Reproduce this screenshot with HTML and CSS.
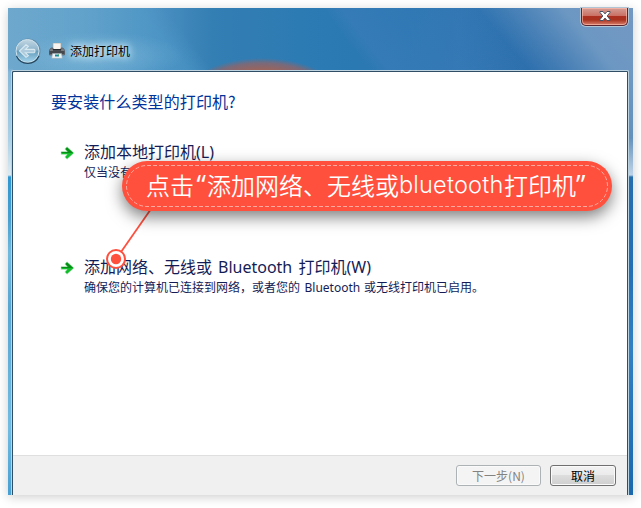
FILE: index.html
```html
<!DOCTYPE html>
<html lang="zh-CN">
<head>
<meta charset="utf-8">
<title>添加打印机</title>
<link rel="stylesheet" href="styles.css">
</head>
<body>
<div class="window">
  <button class="close" aria-label="关闭">
    <svg width="12" height="10" viewBox="0 0 12 10"><path d="M1 .5h3l2 2.400 2-2.400h3v1L8.200 5 11 8.500v1H8L6 7.100 4 9.500H1v-1L3.800 5 1 1.500z" fill="#fff" stroke="#465264" stroke-width="1"/></svg>
  </button>
  <header class="caption">
    <svg class="back" width="28" height="28" viewBox="0 0 28 28">
      <defs><linearGradient id="orb" x1="0" y1="0" x2="0" y2="1"><stop offset="0" stop-color="#c2d7e3"/><stop offset=".46" stop-color="#8db4cb"/><stop offset=".5" stop-color="#649cbc"/><stop offset="1" stop-color="#a4d5ed"/></linearGradient></defs>
      <circle cx="14" cy="14" r="12.500" fill="#577f99" opacity=".6"/>
      <circle cx="13.500" cy="14" r="11.500" fill="url(#orb)" stroke="#d1e4ed"/>
      <path d="M2.500 19A12.300 12.300 0 0 0 25 19" fill="none" stroke="#25475f" stroke-width="1.200"/>
      <path d="M5.500 14l6.500-6.200 2.400 1.600-3 3H20q1 0 1 1.600t-1 1.700h-8.600l3 3-2.400 1.700z" fill="#adcbdc" stroke="#d8e9f1" stroke-width="1.100"/>
    </svg>
    <svg class="printer" width="16" height="16" viewBox="0 0 16 16">
      <path d="M4 0h8v7H4z" fill="#f7f4ef" stroke="#aaa39b" stroke-width=".7"/>
      <path d="M2 5h2v2h8V5h2l1.500 2v5H.5V7z" fill="#777b80" stroke="#54585c" stroke-width=".7"/>
      <path d="M.5 8h15v3H.5z" fill="#44474b"/><path d="M4 6h8v1.500H4z" fill="#272b2f"/>
      <path d="M3.500 10.500h9l.8 4.800H2.700z" fill="#edf3f5" stroke="#9babb3" stroke-width=".6"/>
      <path d="M6 11.500h4v2H6z" fill="#1685a5"/><path d="M9 11.500h1v1H9z" fill="#57a933"/>
    </svg>
    <span class="caption-text">添加打印机</span>
  </header>
  <main class="panel">
    <section class="content">
      <h1>要安装什么类型的打印机?</h1>
      <div class="option first">
        <svg class="arrow" width="15" height="14" viewBox="0 0 15 14"><path d="M1 5.500h6L4.800 3 7 .7 14 7l-7 6.300L4.800 11 7 8.500H1z" fill="#12bd2b" stroke="#d5ead7" stroke-width=".6"/><path d="M1.500 6h7L5.600 3 7 1.500 13 7H1.500z" fill="#088b18"/></svg>
        <div><h2>添加本地打印机<span class="key">(L)</span></h2><p>仅当没有</p></div>
      </div>
      <div class="option">
        <svg class="arrow" width="15" height="14" viewBox="0 0 15 14"><path d="M1 5.500h6L4.800 3 7 .7 14 7l-7 6.300L4.800 11 7 8.500H1z" fill="#12bd2b" stroke="#d5ead7" stroke-width=".6"/><path d="M1.500 6h7L5.600 3 7 1.500 13 7H1.500z" fill="#088b18"/></svg>
        <div><h2>添加网络、无线或<span class="latin">Bluetooth</span>打印机<span class="key">(W)</span></h2><p>确保您的计算机已连接到网络，或者您的<span class="latin">Bluetooth</span>或无线打印机已启用。</p></div>
      </div>
    </section>
    <footer class="actions">
      <button class="next" disabled>下一步(N)</button>
      <button class="cancel">取消</button>
    </footer>
  </main>
</div>
<svg class="pointer" width="52" height="64" viewBox="0 0 52 64"><path d="M46 4L16 47" stroke="#ff503e" stroke-width="1.800"/><circle cx="11" cy="54" r="9" fill="#fff" stroke="#ff503e" stroke-width="2"/><circle cx="11" cy="54" r="5.200" fill="#ff503e"/></svg>
<div class="callout">
  <svg class="stitch" width="490" height="50" viewBox="0 0 490 50"><rect x="4.500" y="4.500" width="481" height="41" rx="20.500" fill="none" stroke="#ffaaa0" stroke-dasharray="4 2"/></svg>
  <span>点击</span><span class="quote open">“</span><span>添加网络、无线或</span><span class="word">bluetooth</span><span>打印机</span><span class="quote">”</span>
</div>
</body>
</html>
```
FILE: styles.css
```css
* { box-sizing: border-box; }
html, body { width: 641px; height: 508px; overflow: hidden; }
body { margin: 0; padding: 8px; background: #fff; font: 12px "Noto Sans CJK SC", sans-serif; position: relative; }
h1, h2, p { margin: 0; font-weight: 400; white-space: nowrap; }
button { font: inherit; padding: 0; }
.window {
  position: relative; display: flex; flex-direction: column; width: 625px; height: 487px; padding: 0 4px 0 3px;
  box-shadow: 0 2px 10px rgba(0,0,0,.2);
  background:
    linear-gradient(transparent 60px, #85b7d8 64px, #a9d0e6 130px, #dceaf2 167px, #2e97d1 169px, #479fd0 210px, #6fb9de 245px, #57a6d2 300px, #70bbe2 420px, #479fd2 100%) left / 5px 100% no-repeat,
    linear-gradient(transparent 60px, #6d99c3 64px, #6491bc 130px, #c0d4e8 167px, #276ead 169px, #246fb3 260px, #327fc2 340px, #1d68ad 100%) right / 6px 100% no-repeat,
    radial-gradient(ellipse 76px 36px at 254px 86px, #a36c62 0%, #9e6359 65%, rgba(145,100,104,.75) 86%, transparent 100%),
    radial-gradient(ellipse 85px 24px at 92px 48px, rgba(150,202,230,.45), transparent),
    linear-gradient(50deg, transparent 46%, rgba(112,154,196,.95) 76%, #7398c2 100%) 390px 0 / 235px 64px no-repeat,
    linear-gradient(52deg, transparent 17%, rgba(60,125,188,.55) 22%, transparent 60%) 300px 0 / 325px 64px no-repeat,
    linear-gradient(52deg, rgba(80,156,202,.45) 68%, transparent 78%) 0 0 / 215px 64px no-repeat,
    linear-gradient(90deg, #87b1d0 0, #72a9cc 70px, #4d91c2 145px, #337eb3 205px, #2b7ab3 320px, #2b77b2 400px, #3277b3 450px, #2a6baa 560px, #2a6baa 100%);
}
.caption { display: flex; align-items: center; height: 62px; padding: 24px 0 0 3px; flex: none; }
.printer { margin-left: 7px; }
.caption-text { margin-left: 5px; color: #000; line-height: 18px; text-shadow: 0 0 7px #e5f5ff, 0 0 8px #d5edfb, 0 0 10px #b9dcf0; }
.close {
  position: absolute; right: 5px; top: 0; width: 47px; height: 18px; display: flex; align-items: center; justify-content: center;
  border: 1px solid #5b2632; border-top: 0; border-radius: 0 0 5px 5px; padding: 0 0 2px 1px;
  background: linear-gradient(#d59d94 0, #ca7165 45%, #ad2f20 48%, #a9321f 70%, #d8806c 100%);
  box-shadow: 0 0 0 1px #b1c4d3, inset 0 0 0 1px rgba(255,190,175,.65);
}
.panel { display: flex; flex-direction: column; flex: 1; border: 1px solid #bdd3df; border-bottom: 0; border-radius: 2px 2px 0 0; box-shadow: inset 1px 1px #304f66, inset -1px 0 #304f66; padding: 2px 1px 0; background: #fff; }
.content { flex: 1; padding: 16px 0 0 38px; }
h1 { color: #003399; font-size: 16px; line-height: 25px; padding-bottom: 1px; letter-spacing: .1px; }
.option { display: flex; height: 64px; margin-top: 51px; padding-left: 9px; color: #151c55; }
.option.first { margin-top: 25px; }
.arrow { margin: 6px 9px 0 0; flex: none; }
.option h2 { font-size: 16px; line-height: 23px; }
.option p { font-size: 12px; line-height: 16px; }
.latin { display: inline-block; font-family: "Noto Sans", sans-serif; line-height: 1; }
h2 .latin { width: 86.5px; padding-left: 6px; }
p .latin { width: 64px; padding-left: 4.5px; }
.key { font-family: "Noto Sans", sans-serif; }
.actions { height: 40px; flex: none; border-top: 1px solid #dfdfdf; background: #f0f0f0; display: flex; justify-content: flex-end; gap: 9px; padding: 9px 11px 0 0; }
.actions button { height: 21px; border-radius: 3px; line-height: 18px; }
.next { width: 85px; color: #838383; border: 1px solid #adb2b5; background: #f4f4f4; box-shadow: inset 0 0 0 1px #fafafa; }
.cancel { width: 66px; color: #000; border: 1px solid #707070; background: linear-gradient(#f2f2f2 0, #ebebeb 48%, #dddddd 50%, #cfcfcf 100%); box-shadow: inset 0 0 0 1px #fafafa; }
.callout { position: absolute; left: 122px; top: 161px; width: 490px; height: 50px; border-radius: 25px; background: #ff503e; color: #fff; display: flex; align-items: center; padding: 0 0 2px 24px; font-size: 24px; line-height: 48px; white-space: nowrap; box-shadow: 0 6px 16px rgba(0,0,0,.5); font-weight: 350; }
.stitch { position: absolute; left: 0; top: 0; }
.quote { width: 13px; font-family: "Open Sans", sans-serif; font-weight: 400; font-size: 27px; }
.quote.open { text-align: right; padding-right: 1px; }
.word { width: 105px; font-family: Inter, sans-serif; font-weight: 300; font-size: 23.5px; letter-spacing: .2px; }
.pointer { position: absolute; left: 105px; top: 205px; }
```
